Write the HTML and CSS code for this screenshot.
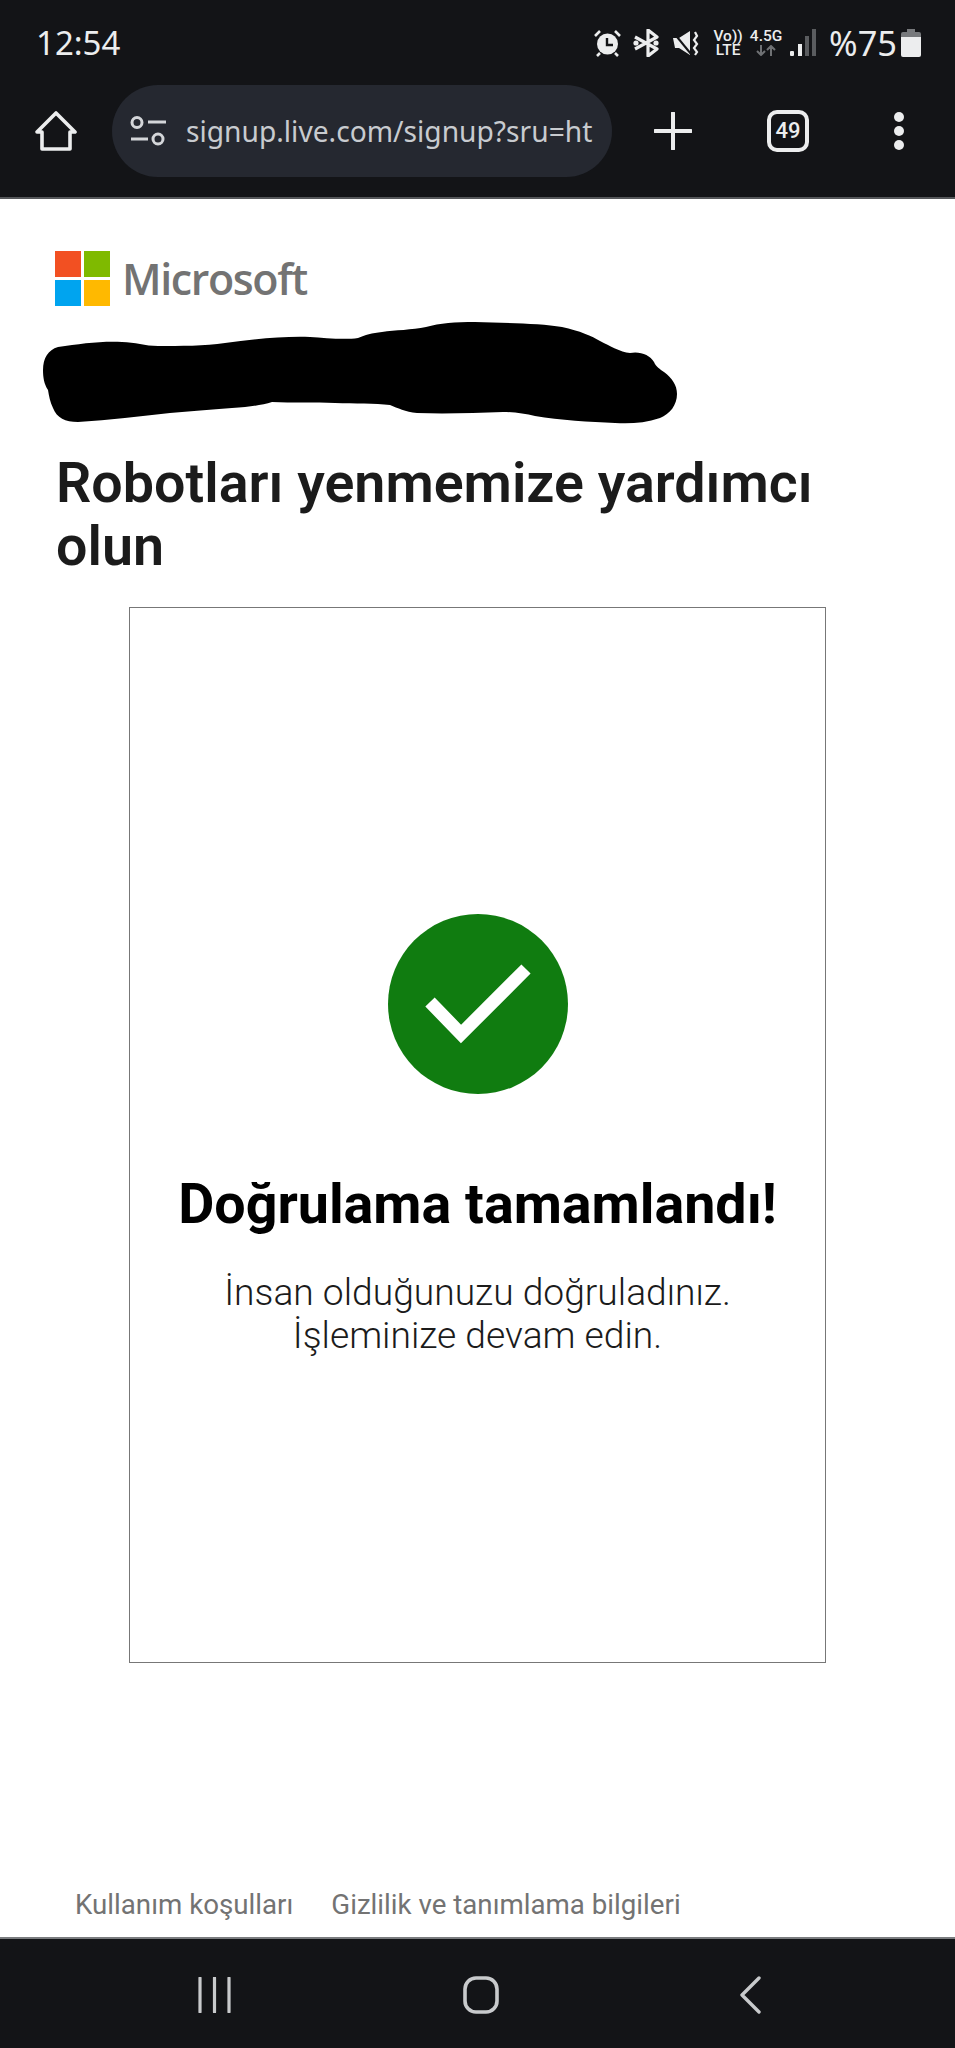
FILE: index.html
```html
<!DOCTYPE html>
<html lang="tr">
<head>
    <meta charset="UTF-8">
    <meta name="viewport" content="width=device-width, initial-scale=1.0">
    <title>Microsoft - Robotları yenmemize yardımcı olun</title>
    <link rel="stylesheet" href="styles.css">
</head>
<body>

    <div class="browser-top">
        <div class="status-bar">
            <span class="clock">12:54</span>
            <div class="status-icons">
                <svg class="ic-alarm" width="27" height="28" viewBox="0 0 27 28">
                    <circle cx="13.5" cy="15" r="10.5" fill="#ecedee"/>
                    <path d="M13 9v7h6" fill="none" stroke="#131417" stroke-width="2.4"/>
                    <path d="M1 7l5-5M26 7l-5-5M6 24l-3 3M21 24l3 3" fill="none" stroke="#ecedee" stroke-width="2.6"/>
                </svg>
                <svg class="ic-bt" width="26" height="28" viewBox="0 0 26 28">
                    <path d="M2 8l22 12-9 7V1l9 7L2 20" fill="none" stroke="#ecedee" stroke-width="3.2" stroke-linejoin="round"/>
                    <circle cx="3" cy="14" r="2.6" fill="#ecedee"/>
                    <circle cx="23" cy="14" r="2.6" fill="#ecedee"/>
                </svg>
                <svg class="ic-mute" width="27" height="28" viewBox="0 0 27 28">
                    <path d="M1 9h6l11-7v24L7 19H3z" fill="#ecedee"/>
                    <path d="M1 3l18 22" stroke="#131417" stroke-width="2"/>
                    <path d="M23 3l2 4-3 4 3 4-3 4 3 4-2 3" fill="none" stroke="#ecedee" stroke-width="2.2"/>
                </svg>
                <div class="net-label volte"><span>Vo))</span><span>LTE</span></div>
                <div class="net-label speed">
                    <span>4.5G</span>
                    <svg width="20" height="11" viewBox="0 0 20 11">
                        <path d="M5 0v9M1 6l4 4 4-4M15 11V2M11 5l4-4 4 4" fill="none" stroke="#6f7174" stroke-width="2"/>
                    </svg>
                </div>
                <svg class="ic-signal" width="26" height="27" viewBox="0 0 26 27">
                    <rect x="0" y="22" width="4" height="5" rx="1" fill="#ecedee"/>
                    <rect x="8" y="15" width="4" height="12" fill="#ecedee"/>
                    <rect x="15" y="7" width="4" height="20" fill="#5a5c5f"/>
                    <rect x="22" y="0" width="4" height="27" fill="#5a5c5f"/>
                </svg>
                <span class="battery-text">%75</span>
                <svg class="ic-battery" width="20" height="28" viewBox="0 0 20 28">
                    <path d="M6 0h8v3h4a2 2 0 0 1 2 2v3H0V5a2 2 0 0 1 2-2h4z" fill="#77797c"/>
                    <path d="M0 8h20v18a2 2 0 0 1-2 2H2a2 2 0 0 1-2-2z" fill="#ecedee"/>
                </svg>
            </div>
        </div>

        <div class="toolbar">
            <svg class="ic-home" width="42" height="42" viewBox="0 0 42 42">
                <path d="M2 22L21 3l19 19h-5v17H7V22z" fill="none" stroke="#ecedee" stroke-width="3.6" stroke-linejoin="round"/>
            </svg>
            <div class="url-pill">
                <svg width="36" height="30" viewBox="0 0 36 30">
                    <circle cx="7" cy="6.500" r="5" fill="none" stroke="#d4d6d9" stroke-width="3"/>
                    <path d="M18 6h18M1 23h17" stroke="#d4d6d9" stroke-width="3"/>
                    <circle cx="28" cy="23" r="5" fill="none" stroke="#d4d6d9" stroke-width="3"/>
                </svg>
                <span class="url-text">signup.live.com/signup?sru=ht</span>
            </div>
            <svg class="ic-plus" width="38" height="38" viewBox="0 0 38 38">
                <path d="M19 1v36M1 19h36" stroke="#ecedee" stroke-width="4" stroke-linecap="round"/>
            </svg>
            <div class="tab-count">49</div>
            <div class="more-dots"><i></i><i></i><i></i></div>
        </div>
    </div>

    <div class="page">
        <div class="ms-logo">
            <div class="ms-squares">
                <i class="sq-red"></i><i class="sq-green"></i><i class="sq-blue"></i><i class="sq-yellow"></i>
            </div>
            <span class="ms-name">Microsoft</span>
        </div>

        <!-- scribble over the e-mail address -->
        <svg class="scribble" width="955" height="106" viewBox="0 320 955 106">
            <path d="M43 370C43 358 48 350 58 347C80 344 100 341 122 342C135 342 145 346 158 346C180 346 205 346 225 343C255 339 285 336 310 337C325 338 345 340 358 338C365 335 372 333 382 332C395 330 412 330 426 327C440 323 455 322 475 322C505 323 540 323 562 327C580 331 592 336 600 341C610 346 620 352 630 353C640 351 650 355 654 362C656 367 660 369 664 372C672 378 677 385 677 394C677 405 670 414 660 418C645 423 630 424 615 423C590 422 560 420 535 416C525 414 515 412 503 412C475 413 445 414 417 413C405 412 398 408 390 405C375 403 355 404 335 403C315 402 292 403 272 402C262 405 250 407 232 408C210 410 190 411 170 413C140 416 110 420 78 422C65 422 57 418 53 408C50 402 49 396 48 390C44 384 43 377 43 370Z" fill="#000"/>
        </svg>

        <h1 class="page-title">Robotları yenmemize yardımcı olun</h1>

        <div class="verify-box">
            <svg class="check" width="180" height="180" viewBox="0 0 180 180">
                <circle cx="90" cy="90" r="90" fill="#107c10"/>
                <path d="M42 88L73 120L138 55" fill="none" stroke="#fff" stroke-width="13"/>
            </svg>
            <h2 class="verify-title">Doğrulama tamamlandı!</h2>
            <p class="verify-text">İnsan olduğunuzu doğruladınız.<br>İşleminize devam edin.</p>
        </div>

        <div class="page-footer">
            <a href="#">Kullanım koşulları</a>
            <a href="#">Gizlilik ve tanımlama bilgileri</a>
        </div>
    </div>

    <div class="nav-bar">
        <svg width="33" height="36" viewBox="0 0 33 36">
            <path d="M2 1v34M16.500 1v34M31 1v34" stroke="#c8cacc" stroke-width="3.200" stroke-linecap="round"/>
        </svg>
        <svg width="36" height="38" viewBox="0 0 36 38">
            <rect x="2" y="2" width="32" height="34" rx="11" fill="none" stroke="#c8cacc" stroke-width="3.600"/>
        </svg>
        <svg class="ic-back" width="22" height="38" viewBox="0 0 22 38">
            <path d="M20 2L3 19l17 17" fill="none" stroke="#c8cacc" stroke-width="3.400" stroke-linecap="round" stroke-linejoin="round"/>
        </svg>
    </div>

</body>
</html>
```

FILE: styles.css
```css
/* General Page Styles */
body {
    font-family: Roboto, "Liberation Sans", sans-serif;
    background-color: #fff;
    color: #1b1b1b;
    margin: 0;
    width: 955px;
    height: 2048px;
    display: flex;
    flex-direction: column;
    overflow: hidden;
}

svg {
    display: block;
    flex: none;
}

/* Browser Top */
.browser-top {
    background-color: #131417;
    border-bottom: 2px solid #55575a;
    height: 197px;
}

.status-bar {
    display: flex;
    align-items: center;
    justify-content: space-between;
    height: 85px;
    padding: 0 34px 0 36px;
}

.clock {
    font-family: "Noto Sans", sans-serif;
    font-size: 33px;
    color: #ecedee;
}

.status-icons {
    display: flex;
    align-items: center;
}

.ic-alarm { margin-right: 12px; }
.ic-bt { margin-right: 13px; }
.ic-mute { margin-right: 15px; }
.ic-signal { margin-right: 13px; }

.net-label {
    display: flex;
    flex-direction: column;
    align-items: center;
    color: #ecedee;
    font-weight: 500;
    line-height: 14px;
    font-size: 15.5px;
}

.volte {
    width: 28px;
    margin-right: 9px;
}

.speed {
    width: 30px;
    margin-right: 9px;
    gap: 2px;
}

.battery-text {
    font-family: "Noto Sans", sans-serif;
    font-size: 34.4px;
    color: #ecedee;
    margin-right: 4px;
}

/* Toolbar */
.toolbar {
    display: flex;
    align-items: center;
    height: 92px;
}

.ic-home { margin-left: 35px; }

.url-pill {
    display: flex;
    align-items: center;
    gap: 20px;
    width: 500px;
    height: 92px;
    margin-left: 35px;
    padding-left: 18px;
    box-sizing: border-box;
    border-radius: 46px;
    background-color: #252830;
}

.url-text {
    font-family: "Noto Sans", sans-serif;
    font-size: 28.2px;
    color: #c8cbcf;
    white-space: nowrap;
}

.ic-plus { margin-left: 42px; }

.tab-count {
    width: 42px;
    height: 42px;
    margin-left: 75px;
    box-sizing: border-box;
    border: 4px solid #ecedee;
    border-radius: 10px;
    color: #ecedee;
    font-size: 22px;
    font-weight: 500;
    line-height: 34px;
    text-align: center;
}

.more-dots {
    display: flex;
    flex-direction: column;
    gap: 4px;
    margin-left: 85px;
}

.more-dots i {
    width: 10px;
    height: 10px;
    border-radius: 50%;
    background-color: #ecedee;
}

/* Page */
.page {
    flex: 1;
    display: flex;
    flex-direction: column;
    min-height: 0;
}

.ms-logo {
    display: flex;
    align-items: center;
    gap: 12px;
    margin: 52px 0 0 55px;
    height: 55px;
}

.ms-squares {
    display: grid;
    grid-template-columns: 26px 26px;
    grid-template-rows: 26px 26px;
    gap: 3px;
}

.sq-red { background-color: #f25022; }
.sq-green { background-color: #7fba00; }
.sq-blue { background-color: #00a4ef; }
.sq-yellow { background-color: #ffb900; }

.ms-name {
    font-family: "Open Sans", sans-serif;
    font-size: 43px;
    font-weight: 600;
    letter-spacing: -1.4px;
    color: #737373;
}

.scribble {
    margin-top: 14px;
}

.page-title {
    margin: 26px 56px 0;
    font-size: 55.6px;
    font-weight: 600;
    line-height: 63px;
    width: 780px;
}

/* Verification Box */
.verify-box {
    display: flex;
    flex-direction: column;
    align-items: center;
    width: 697px;
    height: 1056px;
    margin: 29px auto 0;
    padding-top: 306px;
    box-sizing: border-box;
    border: 1px solid #777;
}

.verify-title {
    margin: 78px 0 0;
    font-size: 55.6px;
    font-weight: 700;
    line-height: 64px;
    color: #000;
}

.verify-text {
    margin: 35px 0 0;
    font-size: 37.2px;
    font-weight: 300;
    line-height: 43px;
    text-align: center;
    color: #1b1b1b;
}

/* Footer */
.page-footer {
    display: flex;
    gap: 38px;
    margin-top: auto;
    padding: 0 0 16px 75px;
    font-size: 27.7px;
    line-height: 32px;
}

.page-footer a {
    color: #737373;
    text-decoration: none;
}

/* Bottom Nav */
.nav-bar {
    display: flex;
    align-items: center;
    height: 107px;
    padding: 2px 0 0 198px;
    background-color: #131417;
    border-top: 2px solid #7a7c7f;
    gap: 232px;
}

.ic-back {
    margin-left: 8px;
}
```
